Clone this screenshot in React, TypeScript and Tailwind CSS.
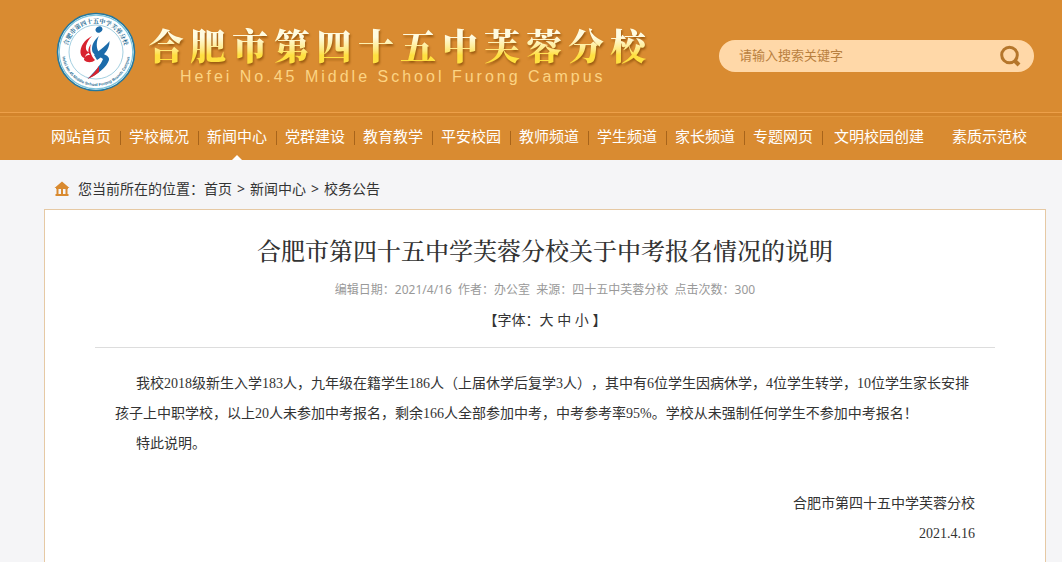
const channels = [
  "网站首页",
  "学校概况",
  "新闻中心",
  "党群建设",
  "教育教学",
  "平安校园",
  "教师频道",
  "学生频道",
  "家长频道",
  "专题网页",
];

const current = "新闻中心";

function SchoolLogo() {
  return (
    <svg viewBox="0 0 80 80" className="h-20 w-20 shrink-0" role="img" aria-label="校徽">
      <defs>
        <path id="ring-top" d="M11 40 A29 29 0 0 1 69 40" />
        <path id="ring-bottom" d="M6 40 A34 34 0 0 0 74 40" />
      </defs>
      <circle cx="40" cy="40" r="38.5" fill="#fff" stroke="#23789f" strokeWidth="1.6" />
      <circle cx="40" cy="40" r="36.8" fill="none" stroke="#7cc4dc" strokeWidth="1.2" />
      <circle cx="40" cy="40" r="27" fill="none" stroke="#8cc3d8" strokeWidth="0.8" />
      <text fontSize="6" fontWeight="700" fill="#1f6c92" fontFamily="'Noto Serif CJK SC', 'Noto Sans CJK SC', serif">
        <textPath href="#ring-top" startOffset="50%" textAnchor="middle">
          合肥市第四十五中学芙蓉分校
        </textPath>
      </text>
      <text fontSize="4" fontWeight="700" fill="#1f6c92" fontFamily="'Liberation Sans', sans-serif">
        <textPath href="#ring-bottom" startOffset="50%" textAnchor="middle">
          Hefei No.45 Middle School Furong Branch Campus
        </textPath>
      </text>
      <ellipse cx="43" cy="17.5" rx="3.6" ry="2.9" transform="rotate(-35 43 17.5)" fill="#1c6cab" />
      <path d="M36 24 C28 28 24 35 24.5 41 C25 44.5 27 46 29 46 C29 43 31.5 41 34 40.5 C31 40 29.5 38 30 34 C31 30 33 27 36 24Z" fill="#d8232f" />
      <path d="M35 32 C32 36 31.5 40 34 43 C30 43 28 45 28 48 C31 51 36 51 39 48 C35 44 33 38 35 32Z" fill="#d8232f" />
      <path d="M43 24 C37 29 35 35 36.5 40 C38.5 44 45 44.5 47 47 C45 53 38 60 31.5 67 C42 62 51 55 53 48 C54 43 46 42 43 40 C40 37 40 29 43 24Z" fill="#1c6cab" />
      <path d="M53.5 29 C51 33 45 37 38 43 L41 48 C46 45 54 38 53.5 29Z" fill="#1c6cab" />
      <path d="M43 54 C40 59 36 63 31.5 67 C36 65 40 63 43 60Z" fill="#d8232f" />
    </svg>
  );
}

function HomeIcon() {
  return (
    <svg viewBox="0 0 16 16" className="h-4 w-4" aria-hidden>
      <path
        d="M8 0.5 L15.5 7 H0.5Z M2.5 7 H4.5 V13 H2.5Z M7 8 H9 V13 H7Z M11.5 7 H13.5 V13 H11.5Z M2 6 H14 V8 H2Z M1.5 13 H14.5 V15 H1.5Z"
        fill="#d98a30"
      />
    </svg>
  );
}

export default function App() {
  return (
    <div className="min-h-screen bg-[#f5f5f7] font-['Noto_Sans','Noto_Sans_CJK_SC',sans-serif] text-[#333]">
      <header className="bg-[#d98b31]">
        <div className="flex h-28 items-center pr-7 pb-2 pl-14">
          <SchoolLogo />
          <div className="ml-2 flex-1 pt-2.5">
            <h1 className="bg-linear-to-b from-[#fffbe0] from-30% to-[#ffe040] to-75% bg-clip-text pl-1 font-['Noto_Serif_CJK_SC','Noto_Sans_CJK_SC',serif] text-4xl leading-10 font-black tracking-[6px] whitespace-nowrap text-transparent drop-shadow-[1px_2px_1px_#9a5a10]">
              合肥市第四十五中芙蓉分校
            </h1>
            <p className="pl-9 font-['Liberation_Sans',sans-serif] text-base leading-6 tracking-[3px] whitespace-nowrap text-[#fcd484]">
              Hefei No.45 Middle School Furong Campus
            </p>
          </div>
          <form className="mt-2 flex h-8 w-[315px] items-center rounded-full bg-[#ffd8a8] pr-3 pl-5">
            <input
              type="text"
              aria-label="搜索"
              placeholder="请输入搜索关键字"
              className="min-w-0 flex-1 bg-transparent text-[13px] text-[#b07a3a] outline-none placeholder:text-[#b9803f]"
            />
            <button type="button" aria-label="搜索" className="cursor-pointer">
              <svg viewBox="0 0 24 24" className="h-6 w-6" fill="none" stroke="#b5762b" strokeWidth="3">
                <circle cx="11.5" cy="11" r="7.8" />
                <path d="M17 17 L21 21" strokeWidth="4" />
              </svg>
            </button>
          </form>
        </div>
        <nav className="border-t border-[#eda04a]">
          <div className="h-1 border-b border-[#e0963c] bg-[#d3842b]" />
          <ul className="flex h-[43px] items-stretch pl-[42px] text-[15px] whitespace-nowrap text-white">
            {channels.map((name) => (
              <li key={name} className="relative flex w-[78px] justify-center">
                <a href="#" className="pt-2">
                  {name}
                </a>
                <span aria-hidden className="absolute top-3.5 -right-px h-3.5 w-px bg-[#a8641a]" />
                {name === current && (
                  <span
                    aria-hidden
                    className="absolute bottom-0 left-1/2 -translate-x-1/2 border-x-5 border-b-5 border-x-transparent border-b-white"
                  />
                )}
              </li>
            ))}
            <li className="pt-2 pl-3">
              <a href="#">文明校园创建</a>
            </li>
            <li className="pt-2 pl-7">
              <a href="#">素质示范校</a>
            </li>
          </ul>
        </nav>
      </header>

      <main className="pr-4 pl-11">
        <div className="flex h-[49px] items-center gap-2 pt-2 pl-2.5 text-sm">
          <HomeIcon />
          <p>
            您当前所在的位置：<a href="#">首页</a>
            <span className="px-[5px]">&gt;</span>
            <a href="#">新闻中心</a>
            <span className="px-[5px]">&gt;</span>
            <a href="#">校务公告</a>
          </p>
        </div>
        <article className="min-h-[353px] border border-b-0 border-[#e6c9a4] bg-white px-[50px] pt-5">
          <header className="border-b border-[#ddd] pb-[13px] text-center">
            <h2 className="font-['Noto_Serif_CJK_SC','Noto_Sans_CJK_SC',serif] text-2xl leading-10 font-medium">
              合肥市第四十五中学芙蓉分校关于中考报名情况的说明
            </h2>
            <p className="mt-1 text-xs leading-8 text-[#999]">
              编辑日期：2021/4/16&nbsp; 作者：办公室&nbsp; 来源：四十五中芙蓉分校&nbsp; 点击次数：300
            </p>
            <p className="text-sm leading-7">
              【字体：<button type="button">大</button> <button type="button">中</button>{" "}
              <button type="button">小</button> 】
            </p>
          </header>
          <div className="px-5 pt-[21px] font-['Liberation_Serif','Noto_Sans_CJK_SC',serif] text-sm leading-[30px] [text-spacing-trim:space-all]">
            <p className="indent-[21px]">
              我校2018级新生入学183人，九年级在籍学生186人（上届休学后复学3人），其中有6位学生因病休学，4位学生转学，10位学生家长安排孩子上中职学校，以上20人未参加中考报名，剩余166人全部参加中考，中考参考率95%。学校从未强制任何学生不参加中考报名！
            </p>
            <p className="indent-[21px]">特此说明。</p>
            <div className="pt-[30px] text-right">
              <p>合肥市第四十五中学芙蓉分校</p>
              <p>2021.4.16</p>
            </div>
          </div>
        </article>
      </main>
    </div>
  );
}
